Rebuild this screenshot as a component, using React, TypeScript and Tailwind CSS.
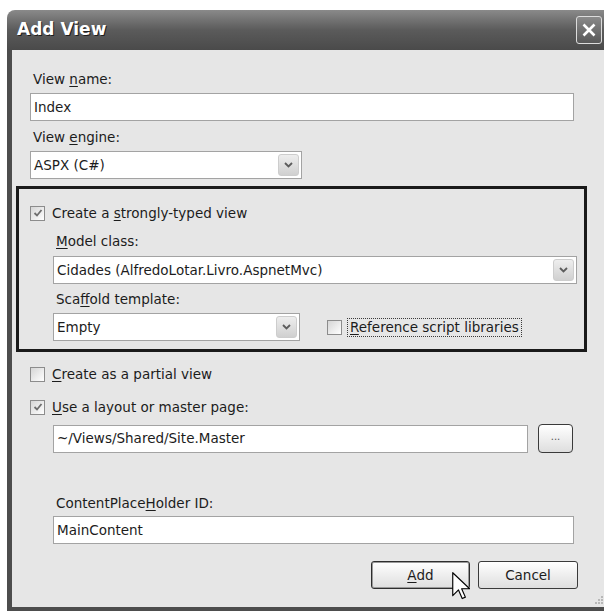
import type { ReactNode } from 'react';
import clsx from 'clsx';

function Key({ children }: { children: ReactNode }) {
  return <span className="underline decoration-1 underline-offset-2">{children}</span>;
}

function Label({ children, className }: { children: ReactNode; className?: string }) {
  return <div className={clsx('h-4 leading-4 pl-[3px]', className)}>{children}</div>;
}

function TextBox({ value, className }: { value: string; className?: string }) {
  return (
    <div className={clsx('h-[28px] border border-[#a3a3a3] bg-white pl-[3px] flex items-center', className)}>
      {value}
    </div>
  );
}

function DropArrow() {
  return (
    <span className="w-[21px] h-[22px] rounded-[3px] border border-[#cdcdcd] bg-gradient-to-b from-[#eeeeee] to-[#d0d0d0] flex items-center justify-center">
      <svg width="9" height="6" viewBox="0 0 9 6">
        <path d="M1 1l3.5 3.5L8 1" stroke="#5c5c5c" strokeWidth="1.8" fill="none" />
      </svg>
    </span>
  );
}

function Select({ value, className }: { value: string; className?: string }) {
  return (
    <div className={clsx('h-[28px] border border-[#a3a3a3] bg-white pl-[3px] pr-[2px] flex items-center justify-between', className)}>
      <span>{value}</span>
      <DropArrow />
    </div>
  );
}

function CheckBox({ checked }: { checked?: boolean }) {
  return (
    <span className="w-[15px] h-[15px] shrink-0 border border-[#8c8c8c] bg-gradient-to-br from-[#d6d6d6] to-white flex items-center justify-center">
      {checked && (
        <svg width="10" height="10" viewBox="0 0 10 10">
          <path d="M1.5 5l2.5 2.5L8.5 2" stroke="#6e6e6e" strokeWidth="1.8" fill="none" />
        </svg>
      )}
    </span>
  );
}

function CheckRow({ checked, children, className }: { checked?: boolean; children: ReactNode; className?: string }) {
  return (
    <div className={clsx('h-4 flex items-center gap-[7px]', className)}>
      <CheckBox checked={checked} />
      <span className="leading-4">{children}</span>
    </div>
  );
}

function Button({ children, primary }: { children: ReactNode; primary?: boolean }) {
  return (
    <div
      className={clsx(
        'h-[28px] rounded-[3px] border bg-gradient-to-b from-white to-[#dedede] flex items-center justify-center',
        primary ? 'w-[99px] border-[#2e2e2e] shadow-[inset_0_0_0_1px_#9a9a9a]' : 'w-[100px] border-[#3a3a3a]'
      )}
    >
      {children}
    </div>
  );
}

function CloseButton() {
  return (
    <div className="w-[26px] h-[28px] rounded-[3px] border border-[#dcdcdc] bg-gradient-to-b from-[#8a8a8a] to-[#585858] flex items-center justify-center">
      <svg width="16" height="16" viewBox="0 0 16 16">
        <path d="M2.5 2.5l11 11M13.5 2.5l-11 11" stroke="white" strokeWidth="2.6" />
      </svg>
    </div>
  );
}

export default function App() {
  return (
    <div className="relative w-[604px] h-[611px] overflow-hidden bg-white font-['DejaVu_Sans',Tahoma,sans-serif] text-[13.5px] text-[#1c1c1c]">
      <div className="ml-[7px] mt-[10px] w-[604px] h-[601px] flex flex-col">
        {/* caption bar */}
        <div className="h-[40px] shrink-0 rounded-t-[8px] bg-gradient-to-b from-[#8a8a8a] via-[#5b5b5b] to-[#4a4a4a] flex items-center justify-between pl-[10px] pr-[9px]">
          <span className="text-white font-bold text-[17px] [text-shadow:1px_1px_0_#1e1e1e]">Add View</span>
          <CloseButton />
        </div>

        {/* client area */}
        <div className="flex-1 border-l-[5px] border-b-[4px] border-[#4d4d4d] bg-[#e6e6e6]">
          <div className="w-[566px] pl-[18px] flex flex-col">
            <Label className="mt-[21px]">
              View <Key>n</Key>ame:
            </Label>
            <TextBox value="Index" className="mt-[6px] w-[544px] h-[27px]" />
            <Label className="mt-[8px]">
              View <Key>e</Key>ngine:
            </Label>
            <Select value="ASPX (C#)" className="mt-[6px] w-[272px]" />

            <div className="mt-[7px] -ml-[14px] w-[571px] h-[166px] border-[3px] border-[#1a1a1a] pl-[11px]">
              <CheckRow checked className="mt-[16px]">
                Create a <Key>s</Key>trongly-typed view
              </CheckRow>
              <div className="ml-[23px] flex flex-col">
                <Label className="mt-[12px]">
                  <Key>M</Key>odel class:
                </Label>
                <Select value="Cidades (AlfredoLotar.Livro.AspnetMvc)" className="mt-[7px] w-[524px] h-[27px]" />
                <Label className="mt-[7px]">
                  Sca<Key>f</Key>fold template:
                </Label>
                <div className="mt-[6px] flex items-center">
                  <Select value="Empty" className="w-[247px]" />
                  <div className="ml-[27px] flex items-center gap-[5px]">
                    <CheckBox />
                    <span className="border border-dotted border-[#3a3a3a] px-[2px] leading-[17px]">
                      <Key>R</Key>eference script libraries
                    </span>
                  </div>
                </div>
              </div>
            </div>

            <CheckRow className="mt-[14px]">
              <Key>C</Key>reate as a partial view
            </CheckRow>
            <CheckRow checked className="mt-[17px]">
              <Key>U</Key>se a layout or master page:
            </CheckRow>
            <div className="mt-[9px] ml-[23px] flex items-center gap-[10px]">
              <TextBox value="~/Views/Shared/Site.Master" className="w-[475px]" />
              <div className="w-[35px] h-[29px] rounded-[4px] border border-[#3a3a3a] bg-gradient-to-b from-white to-[#dedede] flex items-center justify-center text-[10px] text-[#555] pb-[4px]">
                ...
              </div>
            </div>
            <Label className="mt-[42px] ml-[23px]">
              ContentPlace<Key>H</Key>older ID:
            </Label>
            <TextBox value="MainContent" className="mt-[5px] ml-[23px] w-[521px]" />

            <div className="mt-[17px] flex justify-end gap-[8px]">
              <Button primary>
                <Key>A</Key>dd
              </Button>
              <Button>Cancel</Button>
            </div>
          </div>
        </div>
      </div>

      {/* mouse pointer resting on the Add button */}
      <svg className="absolute left-[452px] top-[572px]" width="18" height="28" viewBox="0 0 12.5 19.5">
        <path d="M0.5 0.5v16l4-4 2.6 6 2.2-1-2.6-5.8h5.6z" fill="white" stroke="black" strokeWidth="0.8" strokeLinejoin="round" />
      </svg>

      {/* size grip */}
      <svg className="absolute left-[592px] top-[595px]" width="12" height="12" viewBox="0 0 12 12">
        {[
          [9, 1],
          [6, 4],
          [9, 4],
          [3, 7],
          [6, 7],
          [9, 7],
        ].map(([x, y]) => (
          <rect key={`${x}-${y}`} x={x} y={y} width="2" height="2" fill="#b8b8b8" />
        ))}
      </svg>
    </div>
  );
}
